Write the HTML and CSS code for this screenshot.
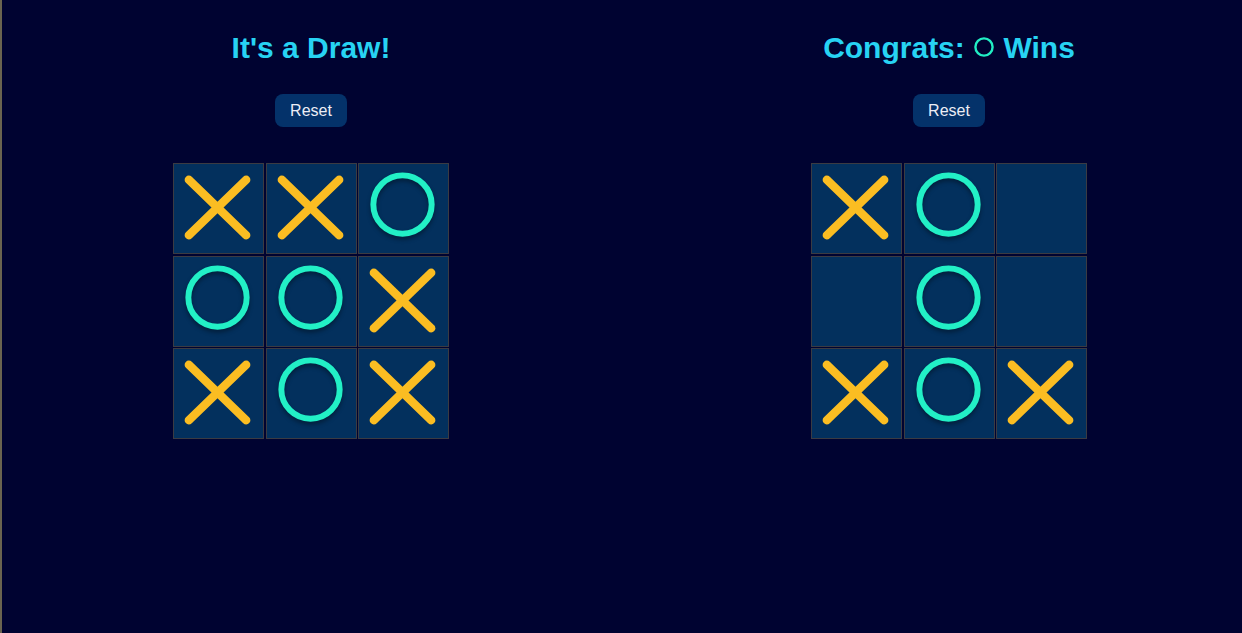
FILE: index.html
```html
<!DOCTYPE html>
<html lang="en">
<head>
<meta charset="utf-8">
<title>Tic Tac Toe</title>
<link rel="stylesheet" href="styles.css">
</head>
<body>
<svg class="defs" width="0" height="0" aria-hidden="true">
  <defs>
    <symbol id="mark-x" viewBox="0 0 90 90">
      <line x1="15" y1="16" x2="73" y2="72" />
      <line x1="73" y1="16" x2="15" y2="72" />
    </symbol>
    <symbol id="mark-o" viewBox="0 0 90 90">
      <circle cx="44" cy="41" r="29.5" />
    </symbol>
  </defs>
</svg>
<main class="games">
  <section class="panel">
    <h1 class="status">It's a Draw!</h1>
    <button class="reset">Reset</button>
    <div class="board">
      <div class="cell"><svg class="mark x"><use href="#mark-x"/></svg></div>
      <div class="cell"><svg class="mark x"><use href="#mark-x"/></svg></div>
      <div class="cell"><svg class="mark o"><use href="#mark-o"/></svg></div>
      <div class="cell"><svg class="mark o"><use href="#mark-o"/></svg></div>
      <div class="cell"><svg class="mark o"><use href="#mark-o"/></svg></div>
      <div class="cell"><svg class="mark x"><use href="#mark-x"/></svg></div>
      <div class="cell"><svg class="mark x"><use href="#mark-x"/></svg></div>
      <div class="cell"><svg class="mark o"><use href="#mark-o"/></svg></div>
      <div class="cell"><svg class="mark x"><use href="#mark-x"/></svg></div>
    </div>
  </section>
  <section class="panel panel-right">
    <h1 class="status">Congrats: <svg class="title-o" viewBox="0 0 20 20"><circle cx="10" cy="10" r="8.6"/></svg> Wins</h1>
    <button class="reset">Reset</button>
    <div class="board">
      <div class="cell"><svg class="mark x"><use href="#mark-x"/></svg></div>
      <div class="cell"><svg class="mark o"><use href="#mark-o"/></svg></div>
      <div class="cell"></div>
      <div class="cell"></div>
      <div class="cell"><svg class="mark o"><use href="#mark-o"/></svg></div>
      <div class="cell"></div>
      <div class="cell"><svg class="mark x"><use href="#mark-x"/></svg></div>
      <div class="cell"><svg class="mark o"><use href="#mark-o"/></svg></div>
      <div class="cell"><svg class="mark x"><use href="#mark-x"/></svg></div>
    </div>
  </section>
</main>
</body>
</html>
```
FILE: styles.css
```css
html, body {
  margin: 0;
  padding: 0;
  height: 100%;
}

body {
  background: #000331;
  border-left: 2px solid #6a6450;
  box-sizing: border-box;
  font-family: "Liberation Sans", Arial, sans-serif;
  overflow: hidden;
}

.defs {
  position: absolute;
  width: 0;
  height: 0;
}

.games {
  display: flex;
  padding-left: 109px;
  gap: 238px;
}

.panel {
  width: 400px;
  display: flex;
  flex-direction: column;
  align-items: center;
  padding-top: 31px;
}

.status {
  margin: 0;
  font-size: 30px;
  line-height: 34px;
  font-weight: bold;
  color: #27d3f3;
  white-space: nowrap;
}

.title-o {
  width: 20px;
  height: 20px;
  margin: 0 1px;
  vertical-align: 1px;
  fill: none;
  stroke: #21eec4;
  stroke-width: 2.4;
}

.reset {
  margin-top: 29px;
  padding: 8px 15px;
  font-family: "Liberation Sans", Arial, sans-serif;
  font-size: 16px;
  line-height: 17px;
  color: #ecedf5;
  background: #04326a;
  border: none;
  border-radius: 8px;
}

.board {
  margin-top: 36px;
  display: grid;
  grid-template-columns: repeat(3, 91px);
  grid-auto-rows: 91px;
  gap: 1.5px;
}

.cell {
  box-sizing: border-box;
  background: #03305d;
  border: 1px solid #3b3b42;
  display: flex;
}

.mark {
  width: 89px;
  height: 89px;
}

.mark.x {
  stroke: #fbbd22;
  stroke-width: 8.5;
  stroke-linecap: round;
}

.mark.o {
  fill: none;
  stroke: #22f0c6;
  stroke-width: 6;
  filter: drop-shadow(0 3px 2px rgba(0, 0, 0, 0.35));
}
```
